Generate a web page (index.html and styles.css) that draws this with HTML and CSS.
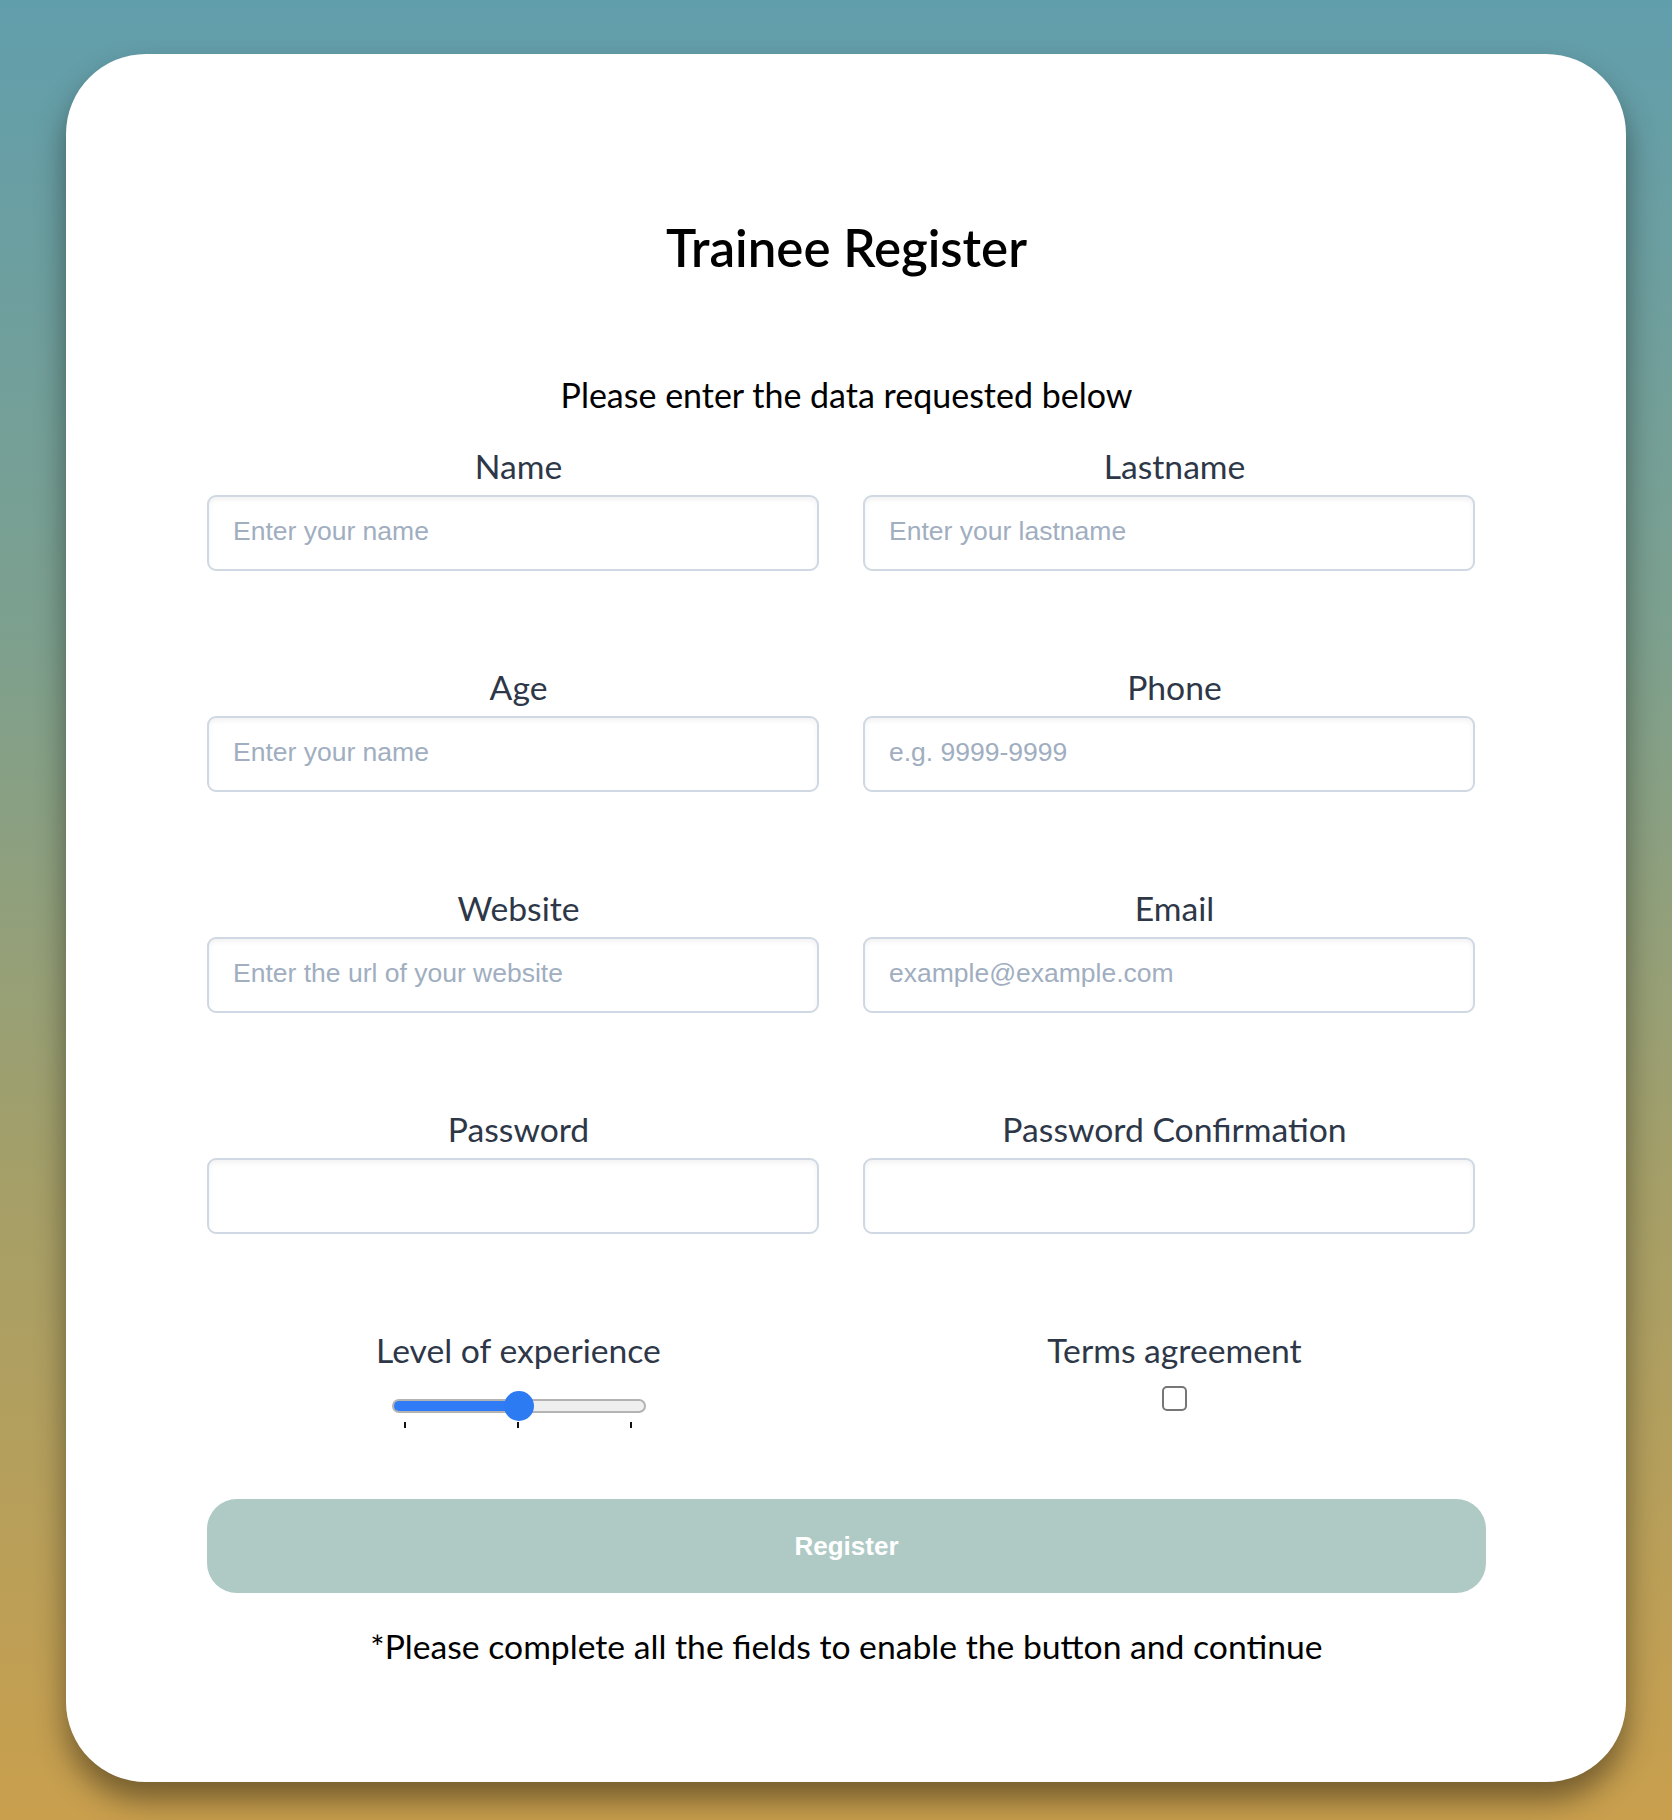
FILE: index.html
```html
<!DOCTYPE html>
<html lang="en">
<head>
<meta charset="utf-8">
<title>Trainee Register</title>
<link rel="stylesheet" href="styles.css">
</head>
<body>
  <main class="card">
    <h1 class="title">Trainee Register</h1>
    <p class="subtitle">Please enter the data requested below</p>
    <form class="fields">
      <div class="field">
        <label class="label">Name</label>
        <input class="input" type="text" placeholder="Enter your name">
      </div>
      <div class="field">
        <label class="label">Lastname</label>
        <input class="input" type="text" placeholder="Enter your lastname">
      </div>
      <div class="field">
        <label class="label">Age</label>
        <input class="input" type="text" placeholder="Enter your name">
      </div>
      <div class="field">
        <label class="label">Phone</label>
        <input class="input" type="text" placeholder="e.g. 9999-9999">
      </div>
      <div class="field">
        <label class="label">Website</label>
        <input class="input" type="text" placeholder="Enter the url of your website">
      </div>
      <div class="field">
        <label class="label">Email</label>
        <input class="input" type="text" placeholder="example@example.com">
      </div>
      <div class="field">
        <label class="label">Password</label>
        <input class="input" type="password">
      </div>
      <div class="field">
        <label class="label">Password Confirmation</label>
        <input class="input" type="password">
      </div>
      <div class="field field-center">
        <label class="label">Level of experience</label>
        <div class="range">
          <div class="range-track"><div class="range-fill" style="width:50%"></div></div>
          <div class="range-thumb" style="left:calc(50% - 15px)"></div>
          <div class="range-ticks"><span></span><span></span><span></span></div>
        </div>
      </div>
      <div class="field field-center">
        <label class="label">Terms agreement</label>
        <span class="checkbox"></span>
      </div>
    </form>
    <button class="btn" type="button">Register</button>
    <p class="note">*Please complete all the fields to enable the button and continue</p>
  </main>
</body>
</html>
```

FILE: styles.css
```css
* { box-sizing: border-box; }

html, body {
  margin: 0;
  padding: 0;
}

body {
  min-height: 1820px;
  background: linear-gradient(180deg, #619eac 0%, #7da08e 35%, #a59f68 65%, #c99f4d 100%);
  padding-top: 54px;
  font-family: "Lato", "Liberation Sans", sans-serif;
  color: #000;
}

.card {
  width: 1560px;
  height: 1728px;
  margin-left: 66px;
  background: #fff;
  border-radius: 80px;
  box-shadow: 0 18px 30px rgba(0, 0, 0, 0.42);
  padding: 168px 140px 0 141px;
}

.title {
  margin: 0;
  font-size: 51px;
  line-height: 52px;
  font-weight: 600;
  text-align: center;
  color: #000;
}

.subtitle {
  margin: 101px 0 0;
  font-size: 34px;
  line-height: 40px;
  text-align: center;
  color: #000;
}

.fields {
  margin-top: 31px;
  display: grid;
  grid-template-columns: 1fr 1fr;
  column-gap: 33px;
  row-gap: 96px;
}

.field {
  display: flex;
  flex-direction: column;
  align-items: flex-start;
}

.field-center {
  align-items: center;
}

.label {
  align-self: stretch;
  display: block;
  font-size: 33.7px;
  line-height: 40px;
  text-align: center;
  color: #2d3748;
}

.input {
  margin-top: 9px;
  width: 612px;
  height: 76px;
  border: 2px solid #cfd8e3;
  border-radius: 9px;
  box-shadow: inset 0 3px 5px rgba(0, 0, 0, 0.05);
  padding: 0 24px 3px;
  font-family: "Liberation Sans", Arial, sans-serif;
  font-size: 26.5px;
  color: #4a5568;
  background: #fff;
  outline: none;
}

.input::placeholder {
  color: #a0aec0;
}

.range {
  position: relative;
  width: 254px;
  height: 36px;
  margin-top: 21px;
}

.range-track {
  position: relative;
  margin-top: 8px;
  height: 14px;
  border-radius: 7px;
  background: #efefef;
  border: 2px solid #b3b3b3;
  overflow: hidden;
}

.range-fill {
  position: absolute;
  left: -2px;
  top: -2px;
  bottom: -2px;
  background: #2f7cf6;
  border: 2px solid #3d6fb6;
  border-right: none;
  border-radius: 7px 0 0 7px;
}

.range-thumb {
  position: absolute;
  top: 0;
  width: 30px;
  height: 30px;
  border-radius: 50%;
  background: #2c7bf2;
}

.range-ticks {
  display: flex;
  justify-content: space-between;
  margin-top: 9px;
  padding: 0 14px 0 12px;
}

.range-ticks span {
  display: block;
  width: 2px;
  height: 6px;
  background: #111;
}

.checkbox {
  display: block;
  margin-top: 16px;
  width: 25px;
  height: 25px;
  border: 2px solid #767676;
  border-radius: 5px;
  background: #fff;
}

.btn {
  display: block;
  margin-top: 72px;
  width: 1279px;
  height: 94px;
  border: none;
  border-radius: 30px;
  background: #afcac5;
  color: #fff;
  font-family: "Liberation Sans", Arial, sans-serif;
  font-weight: 700;
  font-size: 26px;
}

.note {
  margin: 33px 0 0;
  font-size: 33.7px;
  line-height: 40px;
  text-align: center;
  color: #000;
}
```
